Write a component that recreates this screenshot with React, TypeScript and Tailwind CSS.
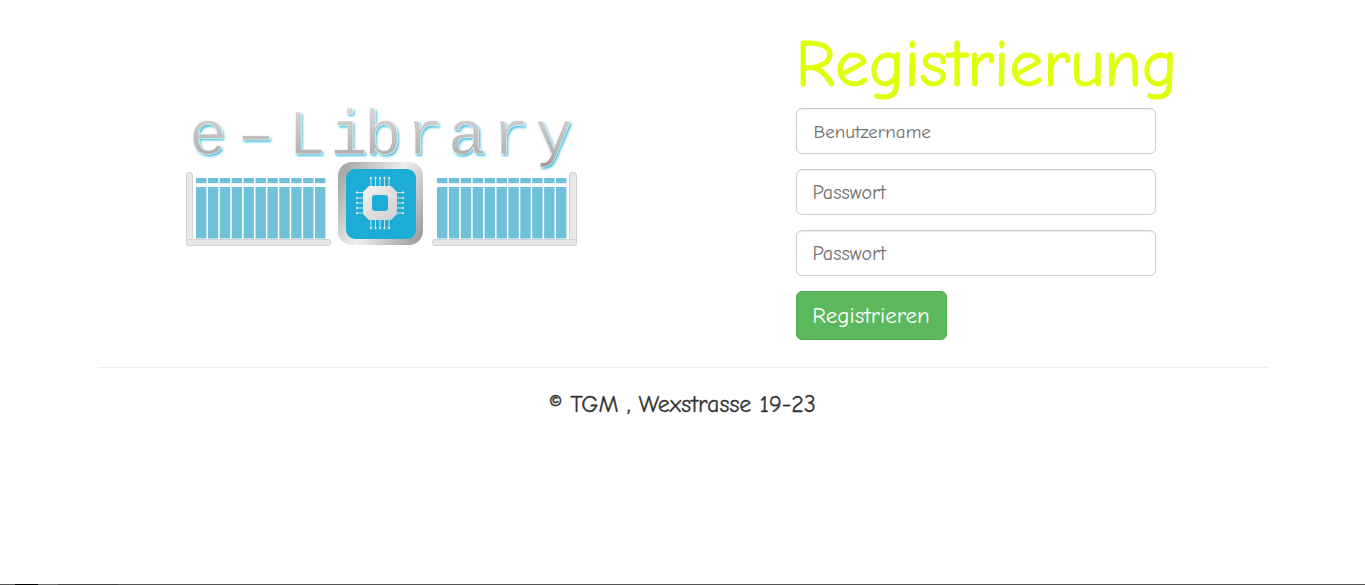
import React from 'react';

const comic = "font-['Comic_Sans_MS','Comic_Neue','Lato',cursive]";

const barXs = [0, 1, 2, 3, 4, 5, 6, 7, 8, 9, 10];
const letterXs = '4 52 103 145 179 221 263 307 350';

const Fence = ({ x, flip }: { x: number; flip?: boolean }) => (
  <g>
    {barXs.map(i => (
      <g key={i} fill="#6fc1da">
        <rect x={x + i * 11.9} y={71} width={10.4} height={5.2} />
        <rect x={x + i * 11.9} y={80} width={10.4} height={51.5} />
      </g>
    ))}
    <g fill="#e8e8e8" stroke="#d2d2d2" strokeWidth={1}>
      {flip ? (
        <>
          <rect x={384.5} y={65.5} width={7} height={73} rx={2.5} />
          <rect x={247.5} y={132.5} width={144} height={6} rx={2.5} />
        </>
      ) : (
        <>
          <rect x={1.5} y={65.5} width={6} height={73} rx={2.5} />
          <rect x={1.5} y={132.5} width={144} height={6} rx={2.5} />
        </>
      )}
    </g>
  </g>
);

const Chip = () => {
  const top = [-9, -4.5, 0, 4.5, 9];
  const side = [-10.5, -5, 0, 5, 10];
  const cx = 195;
  const cy = 96;
  return (
    <g>
      <rect x={153} y={55} width={85} height={83} rx={14} fill="url(#silver)" />
      <rect x={161} y={62} width={70} height={70} rx={9} fill="#1cacd6" />
      <g stroke="#dfe8ea" strokeWidth={0.9} fill="#dfe8ea">
        {top.map(o => (
          <g key={o}>
            <line x1={cx + o} y1={cy - 25} x2={cx + o} y2={cy - 17} />
            <circle cx={cx + o} cy={cy - 25} r={0.8} />
            <line x1={cx + o} y1={cy + 17} x2={cx + o} y2={cy + 25} />
            <circle cx={cx + o} cy={cy + 25} r={0.8} />
          </g>
        ))}
        {side.map(o => (
          <g key={o}>
            <line x1={cx - 23} y1={cy + o} x2={cx - 17} y2={cy + o} />
            <circle cx={cx - 23} cy={cy + o} r={0.8} />
            <line x1={cx + 17} y1={cy + o} x2={cx + 23} y2={cy + o} />
            <circle cx={cx + 23} cy={cy + o} r={0.8} />
          </g>
        ))}
      </g>
      <polygon points="184,79 206,79 212,85 212,107 206,113 184,113 178,107 178,85" fill="url(#silverBody)" />
      <rect x={187} y={88} width={16} height={16} rx={3} fill="#1cacd6" />
    </g>
  );
};

const Logo = () => (
  <svg width={420} height={140} viewBox="0 0 420 140" className="block">
    <defs>
      <linearGradient id="silver" x1="0" y1="0.2" x2="1" y2="0.8">
        <stop offset="0" stopColor="#a8a8a8" />
        <stop offset="0.5" stopColor="#eeeeee" />
        <stop offset="1" stopColor="#a2a2a2" />
      </linearGradient>
      <linearGradient id="silverBody" x1="0" y1="0" x2="1" y2="1">
        <stop offset="0" stopColor="#f2f2f2" />
        <stop offset="1" stopColor="#cfcfcf" />
      </linearGradient>
      <linearGradient id="letters" x1="0" y1="0" x2="0" y2="1">
        <stop offset="0" stopColor="#dcdcdc" />
        <stop offset="0.7" stopColor="#b4b4b4" />
        <stop offset="1" stopColor="#929292" />
      </linearGradient>
      <filter id="soft" x="-5%" y="-10%" width="110%" height="120%">
        <feGaussianBlur stdDeviation="0.9" />
      </filter>
    </defs>
    <text
      x={letterXs}
      y={47}
      fontFamily="'Liberation Mono', monospace"
      fontSize={63}
      fill="#3fc0e2"
      filter="url(#soft)"
      transform="translate(1.5 1.5)"
    >
      e–Library
    </text>
    <text
      x={letterXs}
      y={47}
      fontFamily="'Liberation Mono', monospace"
      fontSize={63}
      fill="url(#letters)"
      stroke="#ffffff"
      strokeWidth={0.5}
    >
      e–Library
    </text>
    <Fence x={11} />
    <Chip />
    <Fence x={252} flip />
  </svg>
);

export default function App() {
  return (
    <div className={`min-h-[585px] flex flex-col bg-white text-[#333] ${comic}`}>
      <div className="w-[1170px] mx-auto">
        <div className="flex h-[368px] border-b border-[#eee]">
          <div className="w-[698px] pl-[87px] pt-[107px]">
            <Logo />
          </div>
          <form className="w-[360px] pt-[20px]">
            <h1 className="text-[67.5px] leading-[88px] text-[#dfff0a] whitespace-nowrap [-webkit-text-stroke:1px_#dfff0a]">
              Registrierung
            </h1>
            <div className="flex flex-col gap-[15px]">
              <input
                type="text"
                placeholder="Benutzername"
                className="w-full h-[46px] pl-[17px] pr-4 pt-px text-[19px] rounded-md border border-[#ccc] placeholder:text-[#6f6f6f] shadow-[inset_0_1px_1px_rgba(0,0,0,0.075)]"
              />
              <input
                type="password"
                placeholder="Passwort"
                className="w-full h-[46px] px-4 pt-px text-[20px] rounded-md border border-[#ccc] placeholder:text-[#6f6f6f] shadow-[inset_0_1px_1px_rgba(0,0,0,0.075)]"
              />
              <input
                type="password"
                placeholder="Passwort"
                className="w-full h-[46px] px-4 pt-px text-[20px] rounded-md border border-[#ccc] placeholder:text-[#6f6f6f] shadow-[inset_0_1px_1px_rgba(0,0,0,0.075)]"
              />
              <button
                type="button"
                className="self-start w-[151px] h-[49px] pt-px text-[23px] text-white bg-[#5cb85c] border border-[#4cae4c] rounded-md"
              >
                Registrieren
              </button>
            </div>
          </form>
        </div>
        <p className="mt-[22px] text-center text-[24px] leading-[28px] [-webkit-text-stroke:0.3px_#333]">
          © TGM , Wexstrasse 19-23
        </p>
      </div>
      <div className="mt-auto h-px bg-[linear-gradient(to_right,#555_15px,#000_15px,#000_38px,#666_38px,#666_58px,#444_58px,#444_118px,#555_118px)]" />
    </div>
  );
}
